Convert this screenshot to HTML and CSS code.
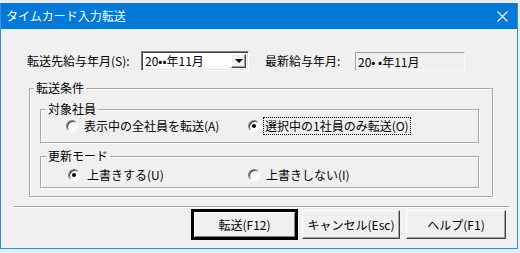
FILE: index.html
```html
<!DOCTYPE html>
<html lang="ja">
<head>
  <meta charset="UTF-8" />
  <title>タイムカード入力転送</title>
  <link rel="stylesheet" href="styles.css">
</head>
<body>
  <div class="window">
    <div class="titlebar">
      <span class="title">タイムカード入力転送</span>
      <svg class="close" width="11" height="11" viewBox="0 0 11 11">
        <path d="M0.5 0.5 L10.5 10.5 M10.5 0.5 L0.5 10.5" stroke="#fff" stroke-width="1.1" fill="none"/>
      </svg>
    </div>

    <div class="content">
      <!-- month row -->
      <div class="month-row">
        <span class="label-target">転送先給与年月(S):</span>
        <div class="combo">
          <span class="combo-text">20••年11月</span>
          <span class="combo-btn"><span class="arrow"></span></span>
        </div>
        <span class="label-latest">最新給与年月:</span>
        <div class="readonly">20• •年11月</div>
      </div>

      <!-- transfer conditions -->
      <fieldset class="group outer">
        <legend>転送条件</legend>

        <fieldset class="group inner first">
          <legend>対象社員</legend>
          <div class="radio-row">
            <label class="opt"><span class="radio"></span>表示中の全社員を転送(A)</label>
            <label class="opt"><span class="radio checked"></span><span class="focus">選択中の1社員のみ転送(O)</span></label>
          </div>
        </fieldset>

        <fieldset class="group inner second">
          <legend>更新モード</legend>
          <div class="radio-row">
            <label class="opt shift"><span class="radio checked"></span>上書きする(U)</label>
            <label class="opt"><span class="radio"></span>上書きしない(I)</label>
          </div>
        </fieldset>
      </fieldset>

      <div class="separator"></div>

      <div class="buttons">
        <button class="btn default">転送(F12)</button>
        <button class="btn cancel">キャンセル(Esc)</button>
        <button class="btn help">ヘルプ(F1)</button>
      </div>
    </div>
  </div>
</body>
</html>
```

FILE: styles.css
```css
body {
  margin: 0;
  background: #e6edf5;
  font-family: "Noto Sans CJK JP", "Liberation Sans", sans-serif;
  font-size: 12px;
  color: #000;
}
.window {
  width: 518px;
  height: 246px;
  margin-top: 3px;
  box-sizing: border-box;
  border: 1px solid #3a8fd9;
  border-top: none;
  background: #f0f0f0;
}
.titlebar {
  height: 26px;
  background: #0078d7;
  color: #fff;
  display: flex;
  align-items: center;
  justify-content: space-between;
  padding: 0 9px 0 5px;
}
.title {
  font-size: 12px;
  line-height: 16px;
}
.content {
  padding: 0 0 0 0;
}

/* month row */
.month-row {
  display: flex;
  align-items: center;
  height: 20px;
  margin-top: 22px;
  padding-left: 26px;
  line-height: 16px;
}
.label-target {
  width: 114px;
}
.combo {
  width: 108px;
  height: 20px;
  box-sizing: border-box;
  background: #fff;
  border: 1px solid;
  border-color: #808080 #fff #fff #808080;
  box-shadow: inset 1px 1px 0 #404040, inset -1px -1px 0 #e3e3e3;
  display: flex;
  align-items: center;
  justify-content: space-between;
  padding: 0 2px 0 3px;
}
.combo-btn {
  width: 15px;
  height: 14px;
  box-sizing: border-box;
  background: #f0f0f0;
  border: 1px solid;
  border-color: #fff #404040 #404040 #fff;
  box-shadow: inset -1px -1px 0 #a0a0a0;
  display: flex;
  align-items: center;
  justify-content: center;
}
.arrow {
  width: 0;
  height: 0;
  border-left: 4px solid transparent;
  border-right: 4px solid transparent;
  border-top: 4px solid #000;
}
.label-latest {
  width: 90px;
  margin-left: 16px;
}
.readonly {
  width: 110px;
  height: 19px;
  box-sizing: border-box;
  border: 1px solid;
  border-color: #a0a0a0 #fafafa #fafafa #a0a0a0;
  background: #f0f0f0;
  padding-left: 2px;
  line-height: 17px;
}

/* group boxes */
.group {
  box-sizing: border-box;
  border: 1px solid #a8a8a8;
  box-shadow: 1px 1px 0 #fff, inset 1px 1px 0 #fff;
  margin: 0;
  min-width: 0;
}
.group legend {
  padding: 0 2px;
  line-height: 16px;
}
.outer {
  width: 464px;
  margin: 9px 0 0 28px;
  padding: 5px 13px 8px 4px;
}
.inner {
  width: 439px;
  margin-left: 6px;
  padding-left: 5px;
  padding-right: 0;
}
.first {
  padding-top: 1px;
  padding-bottom: 8px;
}
.second {
  margin-top: 5px;
  padding-top: 3px;
  padding-bottom: 4px;
}
.radio-row {
  display: flex;
  height: 16px;
  line-height: 16px;
  padding-left: 20px;
}
.opt {
  display: flex;
  align-items: center;
}
.opt:first-child {
  width: 182px;
}
.shift .radio {
  margin-left: 2px;
  margin-right: 7px;
}
.radio {
  width: 12px;
  height: 12px;
  box-sizing: border-box;
  border-radius: 50%;
  border: 1px solid;
  border-color: #808080 #fff #fff #808080;
  box-shadow: inset 1px 1px 0 #404040;
  background: #fff;
  margin-right: 6px;
  display: flex;
  align-items: center;
  justify-content: center;
}
.radio.checked::after {
  content: "";
  width: 4px;
  height: 4px;
  border-radius: 50%;
  background: #000;
}
.focus {
  outline: 1px dotted #000;
  padding: 0 1px;
  margin-left: -2px;
}

.separator {
  margin: 9px 0 0 13px;
  width: 495px;
  height: 1px;
  background: #a0a0a0;
  border-bottom: 1px solid #fff;
}

/* buttons */
.buttons {
  display: flex;
  align-items: center;
  justify-content: flex-end;
  margin-top: 1px;
  padding-right: 11px;
}
.btn {
  font-family: inherit;
  font-size: 12px;
  height: 29px;
  box-sizing: border-box;
  background: #f0f0f0;
  border: 1px solid;
  border-color: #fff #404040 #404040 #fff;
  box-shadow: inset -1px -1px 0 #a0a0a0;
  padding: 0;
  color: #000;
}
.default {
  width: 107px;
  height: 31px;
  border: 3px solid #000;
  box-shadow: inset 1px 1px 0 #fff, inset -1px -1px 0 #808080;
}
.cancel {
  width: 98px;
  margin-left: 4px;
}
.help {
  width: 100px;
  margin-left: 6px;
}
```
